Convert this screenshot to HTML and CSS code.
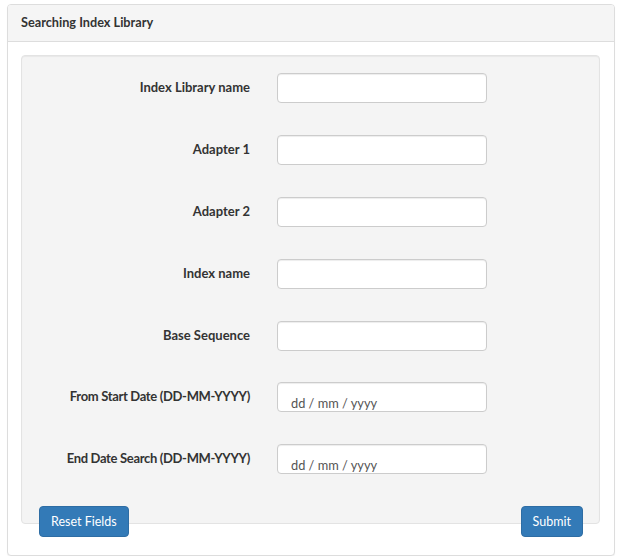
FILE: index.html
```html
<!DOCTYPE html>
<html>
<head>
<meta charset="utf-8">
<link rel="stylesheet" href="styles.css">
</head>
<body>
<div class="panel">
  <div class="panel-heading">Searching Index Library</div>
  <div class="panel-body">
    <div class="well">
      <div class="row"><label class="lbl">Index Library name</label><input class="field" type="text"></div>
      <div class="row"><label class="lbl">Adapter 1</label><input class="field" type="text"></div>
      <div class="row"><label class="lbl">Adapter 2</label><input class="field" type="text"></div>
      <div class="row"><label class="lbl">Index name</label><input class="field" type="text"></div>
      <div class="row"><label class="lbl">Base Sequence</label><input class="field" type="text"></div>
      <div class="row row-shift"><label class="lbl lbl-date">From Start Date (DD-MM-YYYY)</label><input class="field date" type="text" placeholder="dd / mm / yyyy"></div>
      <div class="row"><label class="lbl lbl-date">End Date Search (DD-MM-YYYY)</label><input class="field date" type="text" placeholder="dd / mm / yyyy"></div>
    </div>
    <div class="actions">
      <button class="btn" type="button">Reset Fields</button>
      <button class="btn" type="button">Submit</button>
    </div>
  </div>
</div>
</body>
</html>
```
FILE: styles.css
```css
html, body {
  margin: 0;
  padding: 0;
  background: #fff;
}
body {
  padding: 4px 7px 0 7px;
  font-family: "Lato", "Open Sans", sans-serif;
  color: #333;
  font-size: 12px;
}
.panel {
  border: 1px solid #ddd;
  border-radius: 4px;
  background: #fff;
  box-shadow: 0 1px 1px rgba(0,0,0,0.05);
}
.panel-heading {
  background: #f5f5f5;
  border-bottom: 1px solid #ddd;
  border-radius: 3px 3px 0 0;
  height: 36px;
  line-height: 34px;
  padding: 0 13px;
  font-weight: bold;
  font-size: 12.7px;
}
.panel-body {
  padding: 13px 14px 18px 13px;
}
.well {
  background: #f4f4f4;
  border: 1px solid #e3e3e3;
  border-radius: 4px;
  padding: 17px 0 49px 0;
  box-shadow: inset 0 1px 1px rgba(0,0,0,0.05);
  display: flex;
  flex-direction: column;
  gap: 32px;
}
.row {
  display: grid;
  grid-template-columns: 228px 210px;
  column-gap: 27px;
  align-items: center;
}
.row-shift {
  margin-top: -1px;
}
.lbl {
  text-align: right;
  font-weight: bold;
  font-size: 13px;
  margin-bottom: 3px;
}
.lbl-date {
  letter-spacing: -0.33px;
}
.field {
  box-sizing: border-box;
  width: 210px;
  height: 30px;
  border: 1px solid #ccc;
  border-radius: 4px;
  background: #fff;
  margin: 0;
  padding: 0 12px;
  font-family: inherit;
  font-size: 12px;
  color: #555;
  box-shadow: inset 0 1px 1px rgba(0,0,0,0.075);
}
.field.date {
  padding: 11px 13px 0 13px;
  font-size: 12.8px;
}
.field.date::placeholder {
  color: #555;
  opacity: 1;
}
.actions {
  display: flex;
  justify-content: space-between;
  margin-top: -18px;
  padding: 0 17px 0 18px;
}
.btn {
  height: 31px;
  box-sizing: border-box;
  background: #337ab7;
  border: 1px solid #2e6da4;
  border-radius: 4px;
  color: #fff;
  font-family: inherit;
  font-size: 12.5px;
  padding: 0 11px;
  line-height: 29px;
}
```
